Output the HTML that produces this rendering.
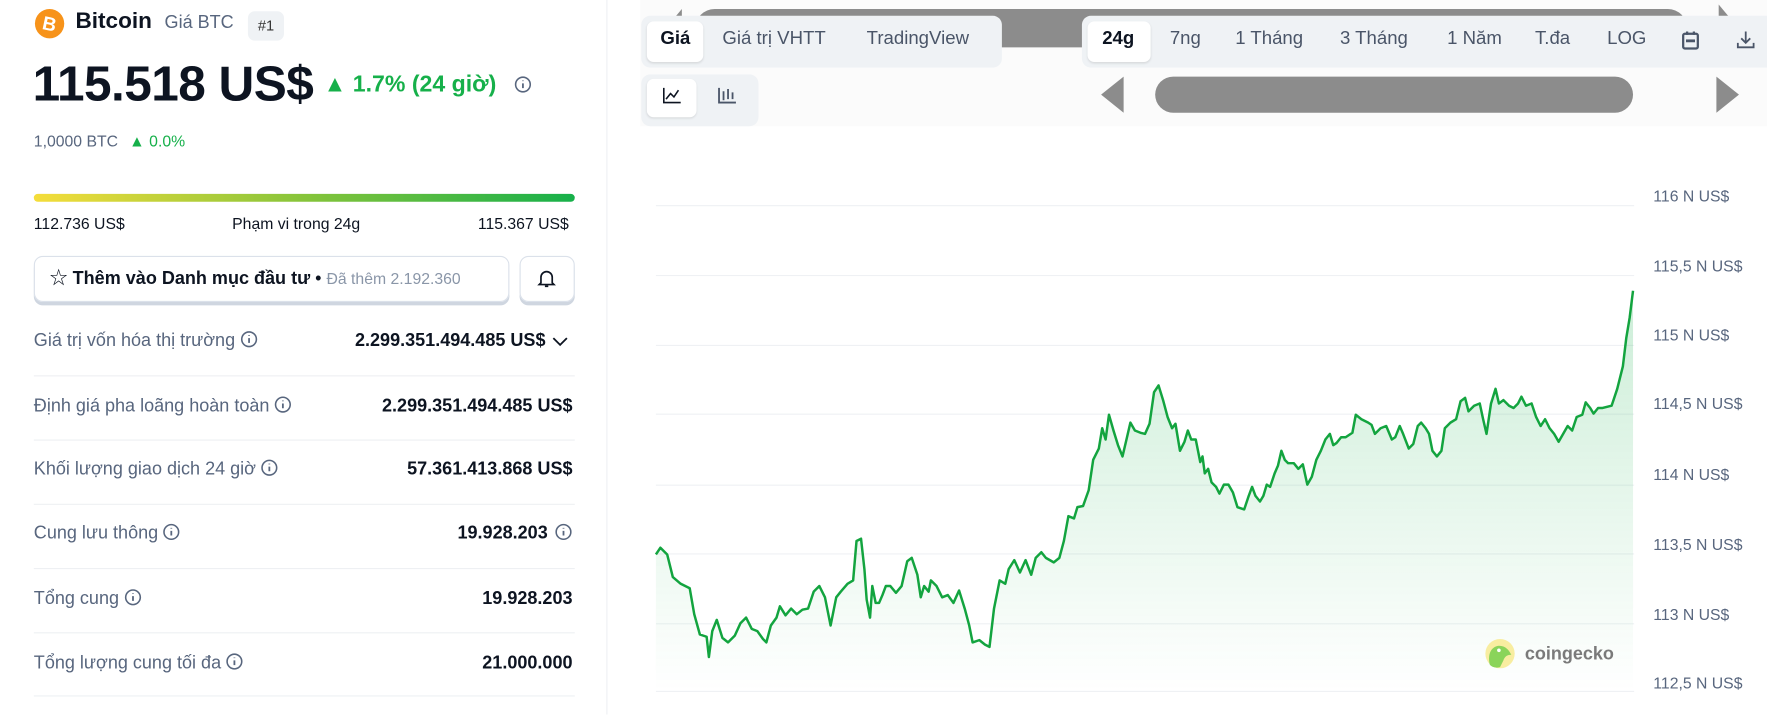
<!DOCTYPE html>
<html><head><meta charset="utf-8"><style>
html,body{margin:0;padding:0;background:#fff;overflow:hidden;width:1767px;height:715px}
#s{position:absolute;left:0;top:0;width:1568px;height:634px;transform:scale(1.127);transform-origin:0 0;font-family:"Liberation Sans","Noto Sans CJK SC",sans-serif;color:#0d1421}
.a{position:absolute;white-space:nowrap}
.lbl{color:#58667e;font-size:16px;line-height:20px}
.val{font-weight:bold;font-size:16px;text-align:right;right:1060px;line-height:20px}
.hr{position:absolute;left:30px;width:480px;height:1px;background:#eef0f3}
.tab{position:absolute;font-size:16.5px;color:#4a5568;top:25px}
.ylab{position:absolute;left:1467px;font-size:14px;color:#58667e}
.grid{position:absolute;left:582px;width:868px;height:1px;background:#eff1f4}
.i{display:inline-block;width:16px;height:16px;vertical-align:-2px;margin-left:4px}
</style></head><body><div id="s">
<svg width="0" height="0" style="position:absolute"><defs><symbol id="inf" viewBox="0 0 16 16"><circle cx="8" cy="8" r="6.5" fill="none" stroke="#58667e" stroke-width="1.4"/><path d="M8 7v4.2M8 4.4v.6" stroke="#58667e" stroke-width="1.6"/></symbol></defs></svg>
<svg class="a" style="left:30px;top:7px" width="28" height="28" viewBox="0 0 28 28"><circle cx="14" cy="14" r="13" fill="#f7931a"/><text x="14" y="20" font-size="17" font-weight="bold" fill="#fff" text-anchor="middle" font-family="Liberation Sans" transform="rotate(12 14 14)">B</text></svg>
<div class="a" style="left:67px;top:8px;font-size:20px;font-weight:bold">Bitcoin</div>
<div class="a" style="left:146px;top:12px;font-size:16px;color:#58667e">Giá BTC</div>
<div class="a" style="left:220px;top:10px;width:32px;height:26px;background:#eff2f5;border-radius:6px;font-size:13px;text-align:center;line-height:26px;color:#333">#1</div>
<div class="a" style="left:29px;top:50px;font-size:44px;font-weight:bold;letter-spacing:-0.5px">115.518 US$</div>
<div class="a" style="left:287px;top:63px;font-size:20.5px;font-weight:bold;color:#16b04a">▲ 1.7% (24 giờ)</div>
<svg class="a" style="left:456px;top:67px" width="16" height="16"><use href="#inf"/></svg>
<div class="a" style="left:30px;top:117px;font-size:14px;color:#58667e">1,0000 BTC <span style="color:#16b04a;margin-left:6px">▲ 0.0%</span></div>
<div class="a" style="left:30px;top:172px;width:480px;height:7px;border-radius:4px;background:linear-gradient(90deg,#f5dd3a,#86c43a 50%,#16b04a)"></div>
<div class="a" style="left:30px;top:190px;font-size:14px">112.736 US$</div>
<div class="a" style="left:206px;top:190px;font-size:14px">Phạm vi trong 24g</div>
<div class="a" style="left:424px;top:190px;font-size:14px">115.367 US$</div>
<div class="a" style="left:30px;top:227px;width:420px;height:39px;border:1px solid #dbe1ea;border-radius:8px;box-shadow:0 3px 0 #cfd6e0;font-size:16px;line-height:39px">
<span style="margin-left:13px">☆</span> <b>Thêm vào Danh mục đầu tư</b> • <span style="font-size:14px;color:#8a96a8">Đã thêm 2.192.360</span></div>
<div class="a" style="left:461px;top:227px;width:47px;height:39px;border:1px solid #dbe1ea;border-radius:8px;box-shadow:0 3px 0 #cfd6e0"></div>
<svg class="a" style="left:476px;top:238px" width="18" height="18" viewBox="0 0 18 18"><path d="M4 13V8a5 5 0 0 1 10 0v5l1.5 1.5h-13z" fill="none" stroke="#0d1421" stroke-width="1.5"/><path d="M7.5 16h3" stroke="#0d1421" stroke-width="1.5"/></svg>
<div class="a lbl" style="left:30px;top:293px">Giá trị vốn hóa thị trường<svg class="i"><use href="#inf"/></svg></div><div class="a val" style="top:293px;right:1084px">2.299.351.494.485 US$</div>
<svg class="a" style="left:490px;top:297px" width="14" height="12"><path d="M1 3l6 6 6-6" fill="none" stroke="#0d1421" stroke-width="1.6"/></svg>
<div class="hr" style="top:333px"></div>
<div class="a lbl" style="left:30px;top:351px">Định giá pha loãng hoàn toàn<svg class="i"><use href="#inf"/></svg></div><div class="a val" style="top:351px">2.299.351.494.485 US$</div>
<div class="hr" style="top:390px"></div>
<div class="a lbl" style="left:30px;top:407px">Khối lượng giao dịch 24 giờ<svg class="i"><use href="#inf"/></svg></div><div class="a val" style="top:407px">57.361.413.868 US$</div>
<div class="hr" style="top:447px"></div>
<div class="a lbl" style="left:30px;top:464px">Cung lưu thông<svg class="i"><use href="#inf"/></svg></div><div class="a val" style="top:464px">19.928.203<svg class="i" style="margin-left:6px"><use href="#inf"/></svg></div>
<div class="hr" style="top:504px"></div>
<div class="a lbl" style="left:30px;top:522px">Tổng cung<svg class="i"><use href="#inf"/></svg></div><div class="a val" style="top:522px">19.928.203</div>
<div class="hr" style="top:561px"></div>
<div class="a lbl" style="left:30px;top:579px">Tổng lượng cung tối đa<svg class="i"><use href="#inf"/></svg></div><div class="a val" style="top:579px">21.000.000</div>
<div class="hr" style="top:617px"></div>
<div class="a" style="left:538px;top:0;width:1px;height:634px;background:#eef0f3"></div>
<div class="a" style="left:568px;top:0;width:1000px;height:112px;background:#fbfbfb"></div>
<div class="a" style="left:617px;top:8px;width:880px;height:34px;background:#8c8c8c;border-radius:17px"></div>
<div class="a" style="left:595px;top:8px;width:0;height:0;border-top:12px solid transparent;border-bottom:12px solid transparent;border-right:10px solid #8c8c8c"></div>
<div class="a" style="left:1525px;top:4px;width:0;height:0;border-top:12px solid transparent;border-bottom:12px solid transparent;border-left:10px solid #8c8c8c"></div>
<div class="a" style="left:569px;top:14px;width:320px;height:46px;background:#eff2f5;border-radius:8px"></div>
<div class="a" style="left:574px;top:19px;width:50px;height:36px;background:#fff;border-radius:6px;box-shadow:0 1px 2px rgba(0,0,0,.1)"></div>
<div class="tab" style="left:586px;color:#0d1421;font-weight:bold">Giá</div>
<div class="tab" style="left:641px">Giá trị VHTT</div>
<div class="tab" style="left:769px">TradingView</div>
<div class="a" style="left:569px;top:66px;width:104px;height:46px;background:#eff2f5;border-radius:8px"></div>
<div class="a" style="left:574px;top:70px;width:44px;height:34px;background:#fff;border-radius:6px;box-shadow:0 1px 2px rgba(0,0,0,.1)"></div>
<svg class="a" style="left:587px;top:77px" width="18" height="16"><path d="M2 1v13h15M4 11l4-5 3 3 4-6" fill="none" stroke="#0d1421" stroke-width="1.4"/></svg>
<svg class="a" style="left:636px;top:77px" width="18" height="16"><path d="M2 1v13h15M6 4v8M10 2v9M14 5v6" fill="none" stroke="#4a5568" stroke-width="1.6"/></svg>
<div class="a" style="left:960px;top:14px;width:608px;height:46px;background:#eff2f5;border-radius:8px 0 0 8px"></div>
<div class="a" style="left:965px;top:19px;width:56px;height:36px;background:#fff;border-radius:6px;box-shadow:0 1px 2px rgba(0,0,0,.1)"></div>
<div class="tab" style="left:978px;color:#0d1421;font-weight:bold">24g</div>
<div class="tab" style="left:1038px">7ng</div>
<div class="tab" style="left:1096px">1 Tháng</div>
<div class="tab" style="left:1189px">3 Tháng</div>
<div class="tab" style="left:1284px">1 Năm</div>
<div class="tab" style="left:1362px">T.đa</div>
<div class="tab" style="left:1426px">LOG</div>
<svg class="a" style="left:1492px;top:27px" width="16" height="18"><rect x="1.5" y="3" width="13" height="13" rx="1.5" fill="none" stroke="#4a5568" stroke-width="2"/><rect x="4" y="8" width="8" height="2.5" fill="#4a5568"/><path d="M5 1v3M11 1v3" stroke="#4a5568" stroke-width="2"/></svg>
<svg class="a" style="left:1540px;top:26px" width="18" height="18"><path d="M9 2v10M5 8l4 4 4-4M2 12v4h14v-4" fill="none" stroke="#4a5568" stroke-width="1.6"/></svg>
<div class="a" style="left:1025px;top:68px;width:424px;height:32px;background:#8c8c8c;border-radius:16px"></div>
<div class="a" style="left:977px;top:68px;width:0;height:0;border-top:16px solid transparent;border-bottom:16px solid transparent;border-right:20px solid #8c8c8c"></div>
<div class="a" style="left:1523px;top:68px;width:0;height:0;border-top:16px solid transparent;border-bottom:16px solid transparent;border-left:20px solid #8c8c8c"></div>
<div class="grid" style="top:182px"></div><div class="grid" style="top:244px"></div><div class="grid" style="top:306px"></div><div class="grid" style="top:367px"></div><div class="grid" style="top:430px"></div><div class="grid" style="top:491px"></div><div class="grid" style="top:553px"></div><div class="grid" style="top:613px"></div>
<div class="ylab" style="top:166px">116 N US$</div><div class="ylab" style="top:228px">115,5 N US$</div><div class="ylab" style="top:289px">115 N US$</div><div class="ylab" style="top:350px">114,5 N US$</div><div class="ylab" style="top:413px">114 N US$</div><div class="ylab" style="top:475px">113,5 N US$</div><div class="ylab" style="top:537px">113 N US$</div><div class="ylab" style="top:598px">112,5 N US$</div>
<svg class="a" style="left:0;top:0" width="1568" height="634">
<defs><linearGradient id="g" x1="0" y1="0" x2="0" y2="1" gradientUnits="objectBoundingBox"><stop offset="0" stop-color="#16b04a" stop-opacity=".22"/><stop offset="1" stop-color="#16b04a" stop-opacity="0"/></linearGradient></defs>
<polygon id="f" fill="url(#g)" points=""/>
<polyline id="l" fill="none" stroke="#13a43f" stroke-width="2.2" stroke-linejoin="round" points="582,492 586,486 592,492 597,512 604,518 612,522 616,545 621,563 627,565 629,583 632,560 636,550 641,566 646,570 652,564 657,553 662,548 667,558 672,560 677,567 680,570 684,555 689,548 692,538 697,546 702,540 707,545 712,541 717,540 722,525 727,520 732,530 737,555 742,530 746,525 752,518 757,515 760,480 764,478 767,505 769,532 772,548 774,520 777,535 780,535 783,528 786,520 790,520 795,526 800,520 805,498 809,495 814,510 817,530 820,520 824,525 826,515 831,520 836,530 841,528 846,535 851,524 856,540 860,555 863,570 869,568 874,572 878,574 882,540 887,515 892,518 895,505 900,497 905,508 910,497 915,510 919,495 924,490 928,495 935,499 940,495 944,480 948,458 953,460 956,450 961,449 966,435 970,408 975,398 978,380 981,390 984,368 988,382 992,395 996,405 1000,388 1003,375 1007,382 1012,384 1016,385 1020,376 1024,348 1028,342 1032,355 1036,370 1040,380 1043,376 1047,400 1051,392 1054,382 1057,390 1061,390 1063,400 1065,410 1067,405 1069,420 1072,416 1075,428 1079,432 1082,438 1086,430 1090,430 1094,437 1098,450 1104,452 1108,440 1111,432 1114,440 1118,445 1121,440 1124,430 1127,432 1131,420 1134,413 1137,400 1140,408 1143,411 1148,411 1152,416 1156,412 1160,430 1164,423 1168,408 1172,400 1176,390 1180,385 1183,395 1186,393 1190,388 1194,388 1200,384 1203,368 1208,372 1214,375 1217,377 1220,385 1225,380 1230,378 1235,390 1238,388 1242,378 1245,385 1250,398 1254,394 1258,378 1261,375 1265,380 1268,385 1271,400 1275,405 1279,400 1282,380 1287,375 1292,372 1296,356 1300,353 1303,365 1308,360 1313,358 1316,372 1319,385 1323,358 1327,345 1330,358 1334,355 1339,360 1343,362 1347,358 1350,352 1354,360 1359,358 1363,370 1367,378 1371,372 1375,380 1379,385 1383,392 1387,385 1391,378 1395,382 1399,370 1404,368 1407,357 1411,362 1414,367 1418,362 1422,362 1430,360 1435,345 1440,325 1443,300 1446,282 1449,258"/>
<circle cx="1331" cy="580" r="13" fill="#f8eda0"/><path d="M1322 590c-2-8 0-16 8-17 6 0 9 4 11 8-4 0-6 2-7 5l-3 6c-4 1-7 0-9-2z" fill="#8ad45a"/><circle cx="1330" cy="577" r="1.6" fill="#fff"/>
<text x="1353" y="585" font-size="16" font-weight="bold" fill="#7a7a7a" font-family="Liberation Sans">coingecko</text>
</svg>
<script>var l=document.getElementById('l').getAttribute('points');document.getElementById('f').setAttribute('points','582,613 '+l+' 1449,613');</script>
</div></body></html>
